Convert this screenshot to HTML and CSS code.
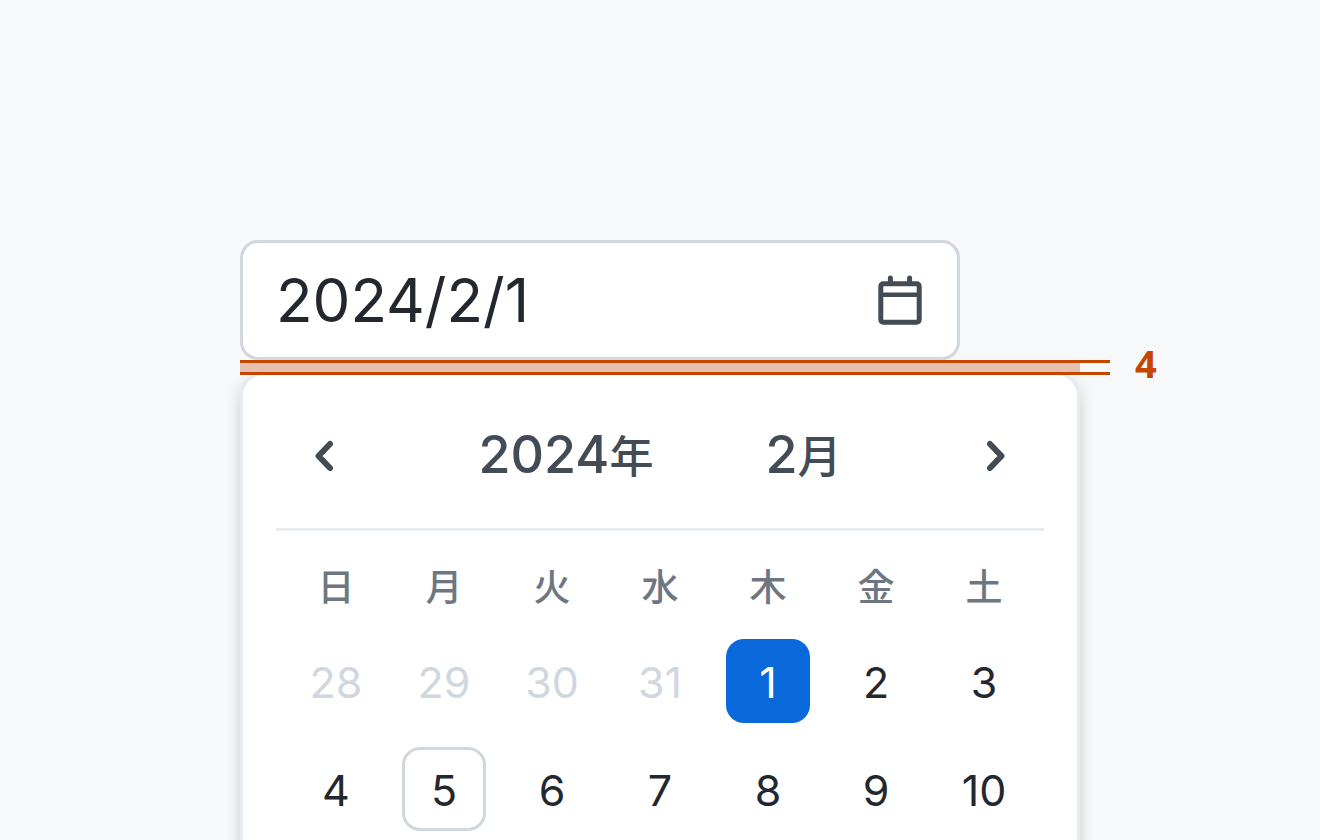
FILE: index.html
```
<!DOCTYPE html>
<html lang="ja">
<head>
<meta charset="utf-8">
<meta name="viewport" content="width=device-width, initial-scale=1">
<title>日付ピッカー</title>
<link rel="stylesheet" href="styles.css">
</head>
<body>
<main class="stage">
  <div class="picker">
    <div class="field">
      <input class="field-input" type="text" value="2024/2/1" aria-label="日付">
      <button class="icon-button" type="button" aria-label="カレンダーを開く">
        <svg class="calendar-icon" viewBox="0 0 60 60" aria-hidden="true">
          <rect x="10.8" y="13.8" width="38.4" height="38.4" rx="2.5"/>
          <path d="M11 24.8H49" stroke-width="4.6"/>
          <path d="M20.4 8V12.5M39.6 8V12.5" stroke-linecap="round"/>
        </svg>
      </button>
    </div>
    <div class="gap-measure">
      <div class="gap-fill"></div>
      <span class="gap-label">4</span>
    </div>
    <section class="panel" aria-label="カレンダー">
      <header class="panel-header">
        <button class="icon-button" type="button" aria-label="前の月">
          <svg class="chevron" viewBox="0 0 48 48" aria-hidden="true"><path d="M30 12L18.5 24L30 36"/></svg>
        </button>
        <div class="period">
          <button class="period-button" type="button">2024<span class="unit">年</span></button>
          <button class="period-button" type="button">2<span class="unit">月</span></button>
        </div>
        <button class="icon-button" type="button" aria-label="次の月">
          <svg class="chevron" viewBox="0 0 48 48" aria-hidden="true"><path d="M18 12L29.5 24L18 36"/></svg>
        </button>
      </header>
      <table class="days">
        <thead>
          <tr><th scope="col">日</th><th scope="col">月</th><th scope="col">火</th><th scope="col">水</th><th scope="col">木</th><th scope="col">金</th><th scope="col">土</th></tr>
        </thead>
        <tbody>
          <tr>
            <td><button class="day outside" type="button">28</button></td>
            <td><button class="day outside" type="button">29</button></td>
            <td><button class="day outside" type="button">30</button></td>
            <td><button class="day outside" type="button">31</button></td>
            <td><button class="day selected" type="button" aria-pressed="true">1</button></td>
            <td><button class="day" type="button">2</button></td>
            <td><button class="day" type="button">3</button></td>
          </tr>
          <tr>
            <td><button class="day" type="button">4</button></td>
            <td><button class="day today" type="button" aria-current="date">5</button></td>
            <td><button class="day" type="button">6</button></td>
            <td><button class="day" type="button">7</button></td>
            <td><button class="day" type="button">8</button></td>
            <td><button class="day" type="button">9</button></td>
            <td><button class="day" type="button">10</button></td>
          </tr>
        </tbody>
      </table>
    </section>
  </div>
</main>
</body>
</html>
```
FILE: styles.css
```
* {
  box-sizing: border-box;
}

body {
  margin: 0;
  background: #f7f8fa;
  color: #23282f;
  font-family: Inter, "Noto Sans CJK JP", sans-serif;
}

button,
input {
  margin: 0;
  padding: 0;
  border: 0;
  background: none;
  color: inherit;
  font: inherit;
}

.stage {
  height: 100vh;
  padding: 240px 240px 0;
  overflow: hidden;
}

.field {
  display: flex;
  align-items: center;
  width: 86%;
  max-width: 720px;
  height: 120px;
  padding: 0 27px 0 33px;
  border: 3px solid #d0d7df;
  border-radius: 18px;
  background: #fff;
}

.field-input {
  flex: 1;
  min-width: 0;
  font-size: 60px;
  line-height: 72px;
  outline: none;
}

.icon-button {
  display: flex;
  flex: none;
  color: #434b55;
}

.icon-button svg {
  fill: none;
  stroke: currentColor;
}

.calendar-icon {
  width: 60px;
  height: 60px;
  stroke-width: 5;
}

.chevron {
  width: 48px;
  height: 48px;
  stroke-width: 6;
  stroke-linecap: round;
  stroke-linejoin: round;
}

/* The lower rule covers the top border of the panel. */
.gap-measure {
  position: relative;
  z-index: 1;
  height: 15px;
  margin: 0 -30px -3px 0;
  border: solid #c54600;
  border-width: 3px 0;
}

.gap-fill {
  height: 100%;
  margin-right: 30px;
  background: #e7c1af;
}

.gap-label {
  position: absolute;
  top: -22px;
  left: 100%;
  margin-left: 25px;
  color: #c54600;
  font: bold 38px/44px "Noto Sans", sans-serif;
}

.panel {
  padding: 0 33px 36px;
  border: 3px solid #e8ecf1;
  border-radius: 24px;
  background: #fff;
  box-shadow: 0 6px 15px rgba(35, 40, 47, 0.2);
}

.panel-header {
  display: flex;
  align-items: center;
  height: 156px;
  padding: 8px 24px 0;
  border-bottom: 3px solid #e8ecf1;
}

.period {
  display: flex;
  flex: 1;
  justify-content: center;
  gap: 112px;
}

.period-button {
  color: #434b55;
  font-size: 52px;
  font-weight: 500;
  line-height: 60px;
}

.unit {
  font-size: 44px;
}

.days {
  width: calc(100% - 12px);
  margin: 0 6px;
  border-collapse: collapse;
  table-layout: fixed;
}

.days th {
  height: 96px;
  padding: 18px 0 0;
  color: #6e7781;
  font-size: 37px;
  font-weight: 500;
  line-height: 48px;
}

.days td {
  height: 108px;
  padding: 0;
  text-align: center;
}

.day {
  width: 84px;
  height: 84px;
  padding-top: 2px;
  border-radius: 18px;
  font-size: 43px;
  line-height: 48px;
  vertical-align: middle;
}

.outside {
  color: #d0d7df;
}

.selected {
  background: #0969da;
  color: #fff;
}

.today {
  border: 3px solid #d0d7df;
}
```
